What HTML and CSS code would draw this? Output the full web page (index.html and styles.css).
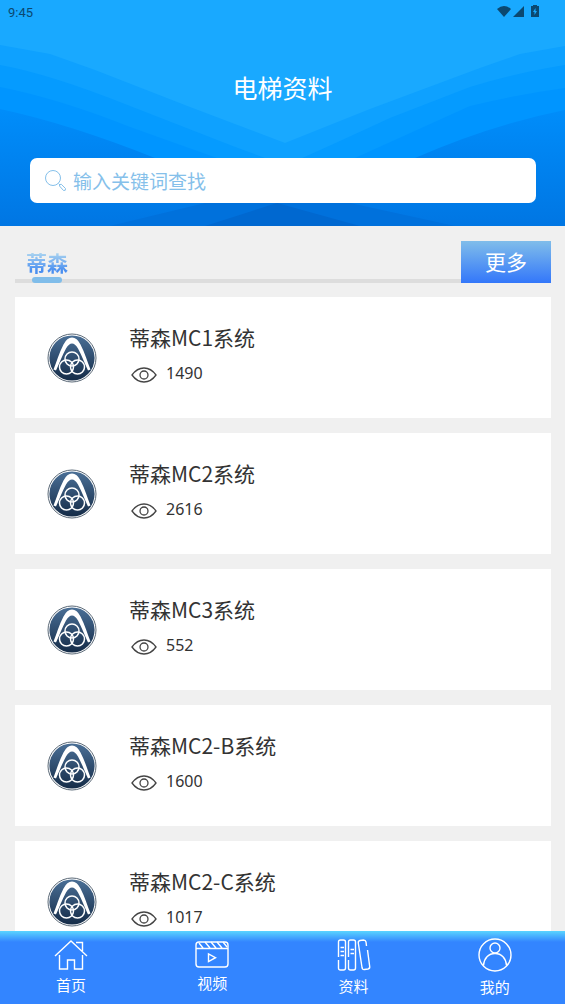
FILE: index.html
```
<!DOCTYPE html>
<html lang="zh-CN">
<head>
    <meta charset="UTF-8">
    <meta name="viewport" content="width=device-width, initial-scale=1.0">
    <title>电梯资料</title>
    <link rel="stylesheet" href="styles.css">
</head>
<body>
    <!-- 公用图标 -->
    <svg class="symbols" aria-hidden="true">
        <defs>
            <linearGradient id="logo-fill" x1="0" y1="0" x2="0" y2="1">
                <stop offset="0" stop-color="#4a6f96"/>
                <stop offset="1" stop-color="#152c48"/>
            </linearGradient>
        </defs>
        <symbol id="logo" viewBox="0 0 50 50">
            <circle cx="25" cy="25" r="24" fill="#fff" stroke="#5c6a78" stroke-width="1"/>
            <circle cx="25" cy="25" r="22.6" fill="url(#logo-fill)"/>
            <path d="M6.500 36.500C9.500 29 12 20 16.500 11.500Q20 4.500 25 4.500Q30 4.500 33.500 11.500C38 20 40.500 29 43.500 36.500L41 37.500C37.500 30 35 23 31 15.500Q28 10.500 25 10.500Q22 10.500 19 15.500C15 23 12.500 30 9 37.500Z" fill="#fff"/>
            <g fill="none" stroke="#fff" stroke-width="1.500">
                <circle cx="25" cy="26" r="7"/>
                <circle cx="19.500" cy="34" r="7"/>
                <circle cx="30.500" cy="34" r="7"/>
            </g>
        </symbol>
        <symbol id="eye" viewBox="0 0 26 18">
            <g fill="none" stroke="#444" stroke-width="1.300">
                <path d="M1 9Q6 2 13 2Q20 2 25 9Q20 16 13 16Q6 16 1 9Z"/>
                <circle cx="13" cy="9" r="4"/>
            </g>
        </symbol>
    </svg>

    <header class="header">
        <svg class="header-bg" viewBox="0 0 565 226" preserveAspectRatio="none" aria-hidden="true">
            <defs>
                <linearGradient id="deep" gradientUnits="userSpaceOnUse" x1="0" y1="110" x2="0" y2="226">
                    <stop offset="0" stop-color="#008dfa"/>
                    <stop offset="1" stop-color="#0076e3"/>
                </linearGradient>
            </defs>
            <path fill="#0ea1ff" d="M0 45L50 54L95 70L190 107L285 143L370 109L480 68L520 54L565 46V226H0Z"/>
            <path fill="#059bff" d="M0 65Q50 74 130 106L230 145Q270 160 286 165Q310 155 390 118L470 87Q520 72 565 65V226H0Z"/>
            <path fill="#0095ff" d="M0 87Q60 99 130 127L217 158L286 185L355 158L470 106Q520 94 565 88V226H0Z"/>
            <path fill="url(#deep)" d="M0 109Q70 124 155 158L230 185H340L415 158Q490 125 565 110V226H0Z"/>
            <path fill="#0071dc" d="M110 226L205 203H350L455 226Z"/>
            <path fill="#0068d0" d="M205 226L277 203L360 226Z"/>
        </svg>
        <div class="status-bar">
            <span>9:45</span>
            <svg width="44" height="14" viewBox="0 0 44 14" fill="#0b4870" aria-hidden="true">
                <path d="M0 4Q7-2 14 4L7 12Z"/>
                <path d="M27 1V12H16Z"/>
                <path fill-rule="evenodd" d="M36 0H40V1H42V12H34V1H36ZM38.500 3L36 7H37.500V10L40 6H38.500Z"/>
            </svg>
        </div>
        <h1 class="title">电梯资料</h1>
        <form class="search">
            <label for="keyword" aria-label="查找">
                <svg width="22" height="22" viewBox="0 0 22 22" fill="none" stroke="#85c0ea" aria-hidden="true">
                    <circle cx="8" cy="8" r="7.500"/>
                    <path d="M13.500 13.500L15 15M14.500 16Q14 14 16.300 14.300L20.500 18.500Q21 21 18.500 20.500Z"/>
                </svg>
            </label>
            <input type="search" id="keyword" name="keyword" placeholder="输入关键词查找">
        </form>
    </header>

    <main class="content">
        <div class="tabs">
            <h2 class="tab"><span>蒂森</span></h2>
            <button type="button" class="more">更多</button>
        </div>

        <div class="list">
            <a class="card" href="#mc1">
                <svg class="card-logo"><use href="#logo"/></svg>
                <div class="card-info">
                    <h3>蒂森MC1系统</h3>
                    <p><svg class="eye"><use href="#eye"/></svg><span>1490</span></p>
                </div>
            </a>
            <a class="card" href="#mc2">
                <svg class="card-logo"><use href="#logo"/></svg>
                <div class="card-info">
                    <h3>蒂森MC2系统</h3>
                    <p><svg class="eye"><use href="#eye"/></svg><span>2616</span></p>
                </div>
            </a>
            <a class="card" href="#mc3">
                <svg class="card-logo"><use href="#logo"/></svg>
                <div class="card-info">
                    <h3>蒂森MC3系统</h3>
                    <p><svg class="eye"><use href="#eye"/></svg><span>552</span></p>
                </div>
            </a>
            <a class="card" href="#mc2-b">
                <svg class="card-logo"><use href="#logo"/></svg>
                <div class="card-info">
                    <h3>蒂森MC2-B系统</h3>
                    <p><svg class="eye"><use href="#eye"/></svg><span>1600</span></p>
                </div>
            </a>
            <a class="card" href="#mc2-c">
                <svg class="card-logo"><use href="#logo"/></svg>
                <div class="card-info">
                    <h3>蒂森MC2-C系统</h3>
                    <p><svg class="eye"><use href="#eye"/></svg><span>1017</span></p>
                </div>
            </a>
        </div>
    </main>

    <!-- 底部导航 -->
    <nav class="nav">
        <a href="#home">
            <svg width="34" height="30" viewBox="0 0 34 30" aria-hidden="true">
                <path d="M1 16L17 1L33 16M22 2.500H28.500V11M5.500 15V29H13.500V20H20.500V29H28.500V15"/>
            </svg>
            <span>首页</span>
        </a>
        <a href="#video">
            <svg width="34" height="27" viewBox="0 0 34 27" aria-hidden="true">
                <rect x="1" y="1" width="32" height="25" rx="3"/>
                <path d="M1 7.500H33M4 2L8 7M10 1L15 7M16 1L21 7M22 1L27 7M28 1L32 6M13.500 13V20.500L20.500 16.700Z"/>
            </svg>
            <span>视频</span>
        </a>
        <a href="#docs">
            <svg width="34" height="32" viewBox="0 0 34 32" aria-hidden="true">
                <path d="M1.500 18V3Q1.500 1 3.500 1H6.500Q8.500 1 8.500 3V29Q8.500 31 6.500 31H3.500Q1.500 31 1.500 29V21"/>
                <path d="M11.500 18V3Q11.500 1 13.500 1H16.500Q18.500 1 18.500 3V29Q18.500 31 16.500 31H13.500Q11.500 31 11.500 29V21"/>
                <path d="M29.500 7L29 3Q28.500 1 26.500 1L23 1.500Q21 2 21.300 4L25 28.500Q25.500 31 27.500 30.500L31 30Q33 29.500 32.700 27.500L30.500 11"/>
                <path d="M3.500 8.500H7M3.500 12.500H7M3.500 16.500H7M13.500 10.500H17M13.500 14.500H17"/>
            </svg>
            <span>资料</span>
        </a>
        <a href="#mine">
            <svg width="34" height="34" viewBox="0 0 34 34" aria-hidden="true">
                <circle cx="17" cy="17" r="16"/>
                <circle cx="17" cy="10" r="5"/>
                <path d="M5.500 27.500C6 20 10.500 15.500 17 15.500C23.500 15.500 28 20 28.500 27.500"/>
            </svg>
            <span>我的</span>
        </a>
    </nav>
</body>
</html>
```
FILE: styles.css
```
* {
    box-sizing: border-box;
    margin: 0;
    padding: 0;
}

body {
    display: flex;
    flex-direction: column;
    height: 100vh;
    overflow: hidden;
    font-family: "Noto Sans CJK SC", sans-serif;
    color: #333;
    background: #f0f0f0;
}

a {
    color: inherit;
    text-decoration: none;
}

.symbols {
    position: absolute;
    width: 0;
    height: 0;
}

/* 头部 */
.header {
    position: relative;
    flex: none;
    padding-bottom: 23px;
    background: #19a9ff;
}

.header-bg {
    position: absolute;
    inset: 0;
    width: 100%;
    height: 100%;
}

.status-bar,
.title,
.search {
    position: relative;
}

.status-bar {
    display: flex;
    justify-content: space-between;
    align-items: center;
    height: 24px;
    padding: 0 24px 0 8px;
    font: 400 13px Roboto, sans-serif;
    color: #0b4870;
}

.title {
    padding: 43px 0 51px;
    font-size: 25px;
    font-weight: 400;
    line-height: 40px;
    text-align: center;
    color: #fff;
}

.search {
    display: flex;
    align-items: center;
    gap: 6px;
    height: 45px;
    margin: 0 29px 0 30px;
    padding: 0 15px;
    border-radius: 7px;
    background: #fff;
}

.search label {
    display: flex;
}

.search input {
    flex: 1;
    min-width: 0;
    border: 0;
    outline: 0;
    background: none;
    font-family: inherit;
    font-size: 19px;
    color: #333;
}

.search input::placeholder {
    color: #85c0ea;
}

/* 内容 */
.content {
    flex: 1;
    min-height: 0;
    padding: 15px 14px 0 15px;
    overflow: hidden;
}

.tabs {
    display: flex;
    height: 42px;
    margin-bottom: 14px;
}

.tab {
    position: relative;
    flex: 1;
    padding-left: 11px;
    border-bottom: 4px solid #ddd;
    font-size: 21px;
    line-height: 42px;
}

.tab span {
    display: inline-block;
    background: linear-gradient(#a8d2f0 30%, #4a8ff0 70%);
    background-clip: text;
    -webkit-background-clip: text;
    color: transparent;
}

.tab::after {
    content: "";
    position: absolute;
    left: 17px;
    bottom: -4px;
    width: 30px;
    height: 6px;
    border-radius: 3px;
    background: #80bdea;
}

.more {
    width: 90px;
    padding-bottom: 2px;
    border: 0;
    background: linear-gradient(#80bdea, #3377fa);
    font-family: inherit;
    font-size: 21px;
    color: #fff;
}

.list {
    display: flex;
    flex-direction: column;
    gap: 15px;
}

.card {
    display: flex;
    align-items: center;
    gap: 32px;
    height: 121px;
    padding-left: 32px;
    background: #fff;
}

.card-logo {
    width: 50px;
    height: 50px;
}

.card-info {
    padding-bottom: 10px;
}

.card h3 {
    font-size: 21px;
    font-weight: 400;
    line-height: 40px;
}

.card p {
    display: flex;
    align-items: center;
    gap: 9px;
    font-family: "Noto Sans", sans-serif;
    font-size: 16px;
    line-height: 32px;
}

.eye {
    width: 26px;
    height: 18px;
    margin: 5px 0 0 2px;
}

/* 底部导航 */
.nav {
    display: flex;
    flex: none;
    height: 73px;
    background: linear-gradient(#5ad4ff, #3385ff 11px);
}

.nav a {
    display: flex;
    flex: 1;
    flex-direction: column;
    align-items: center;
    justify-content: center;
    gap: 4px;
    padding-left: 1px;
    font-size: 15px;
    line-height: 22px;
    color: #fff;
}

.nav svg {
    fill: none;
    stroke: #fff;
    stroke-width: 1.4;
}
```
